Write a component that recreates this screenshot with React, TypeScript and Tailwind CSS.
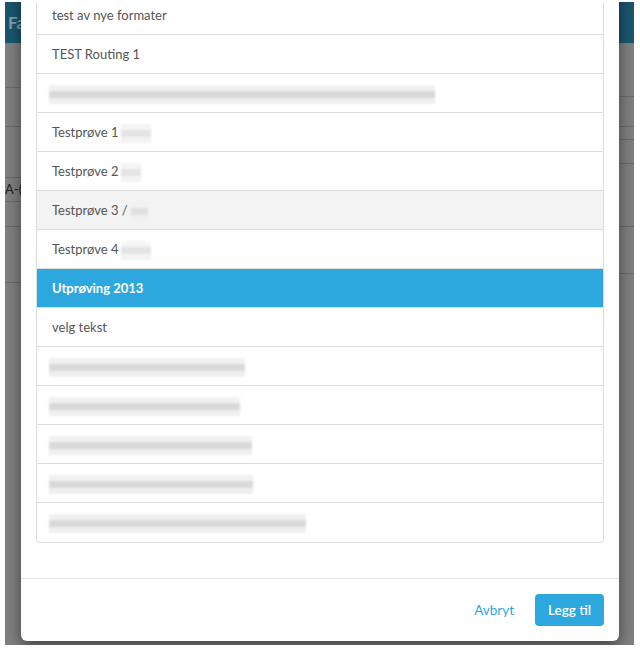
import React from 'react';

type Row =
  | { kind: 'text'; label: string; tail?: number }
  | { kind: 'blur'; width: number };

const rows: Row[] = [
  { kind: 'text', label: 'Oversikt over prøver' },
  { kind: 'text', label: 'Spørsmål og oppgaver til gjennomgang i praksis og oppfølging' },
  { kind: 'text', label: 'test av nye formater' },
  { kind: 'text', label: 'TEST Routing 1' },
  { kind: 'blur', width: 386 },
  { kind: 'text', label: 'Testprøve 1', tail: 30 },
  { kind: 'text', label: 'Testprøve 2', tail: 20 },
  { kind: 'text', label: 'Testprøve 3 /', tail: 17 },
  { kind: 'text', label: 'Testprøve 4', tail: 30 },
  { kind: 'text', label: 'Utprøving 2013' },
  { kind: 'text', label: 'velg tekst' },
  { kind: 'blur', width: 196 },
  { kind: 'blur', width: 191 },
  { kind: 'blur', width: 203 },
  { kind: 'blur', width: 204 },
  { kind: 'blur', width: 257 },
];

const SELECTED = 'Utprøving 2013';
const HOVER = 'Testprøve 3 /';

const Smudge = ({ width, className = '' }: { width: number; className?: string }) => (
  <div className={`flex flex-col blur-[1px] ${className}`} style={{ width }}>
    <div className="h-[6px] bg-[#f1f1f1]" />
    <div className="h-[7px] bg-[#d9d9d9]" />
    <div className="h-[6px] bg-[#efefef]" />
  </div>
);

const ListRow = ({ row, last }: { row: Row; last: boolean }) => {
  const selected = row.kind === 'text' && row.label === SELECTED;
  const hover = row.kind === 'text' && row.label === HOVER;
  return (
    <div
      className={[
        'flex items-center h-[39px] px-[15px] pt-[2px] text-[13px]',
        last ? 'h-[38px]' : 'border-b border-[#dddddd]',
        selected ? 'bg-[#2ca8de] text-white font-bold' : hover ? 'bg-[#f3f3f3] text-[#555]' : 'text-[#555]',
      ].join(' ')}
    >
      {row.kind === 'text' ? (
        <>
          <span className="whitespace-nowrap">{row.label}</span>
          {row.tail && <Smudge width={row.tail} className="ml-[3px] opacity-70" />}
        </>
      ) : (
        <Smudge width={row.width} className="-ml-[3px]" />
      )}
    </div>
  );
};

export default function App() {
  return (
    <div className="w-[640px] h-[649px] bg-white pt-[2px] pl-[5px] pr-[6px] pb-[4px]" style={{ fontFamily: 'Lato, "Open Sans", sans-serif' }}>
      <div className="relative h-full overflow-hidden bg-[#808080]">
        {/* dimmed page behind the dialog */}
        <div className="h-[41px] bg-[#1a566f] pl-[3px] flex items-center">
          <span className="text-[17px] font-bold text-[#7f9fae]">Fa</span>
        </div>
        <div className="flex justify-between">
          <div className="w-[16px] flex flex-col">
            <div className="h-[45px] border-b border-[#6c6c6c]" />
            <div className="h-[39px] border-b border-[#6c6c6c]" />
            <div className="h-[51px] border-b border-[#6c6c6c]" />
            <div className="h-[24px] border-b border-[#6c6c6c] flex items-center text-[13px] text-[#1e1e1e] whitespace-nowrap">A-(</div>
            <div className="h-[25px] border-b border-[#6c6c6c]" />
            <div className="h-[56px] border-b border-[#6c6c6c]" />
          </div>
          <div className="w-[15px] flex flex-col">
            <div className="h-[54px] border-b border-[#6c6c6c]" />
            <div className="h-[30px] border-b border-[#6c6c6c]" />
            <div className="h-[13px] border-b border-[#6c6c6c]" />
            <div className="h-[24px] border-b border-[#6c6c6c]" />
            <div className="h-[63px] border-b border-[#6c6c6c]" />
            <div className="h-[47px] border-b border-[#6c6c6c]" />
          </div>
        </div>

        {/* dialog */}
        <div className="absolute left-[16px] right-[15px] bottom-[4px] bg-white rounded-md shadow-[0_5px_15px_rgba(0,0,0,0.5)]">
          <div className="px-[15px] pb-[35px]">
            <div className="border border-[#dddddd] rounded-b-[4px] overflow-hidden">
              {rows.map((row, i) => (
                <ListRow key={i} row={row} last={i === rows.length - 1} />
              ))}
            </div>
          </div>
          <div className="border-t border-[#e5e5e5] px-[15px] py-[15px] flex justify-end items-center gap-[21px]">
            <button className="text-[13.5px] text-[#2ca8de]">Avbryt</button>
            <button className="h-[32px] px-[13px] rounded-[4px] bg-[#2ca8de] text-white text-[13.5px] font-semibold">Legg til</button>
          </div>
        </div>
      </div>
    </div>
  );
}
